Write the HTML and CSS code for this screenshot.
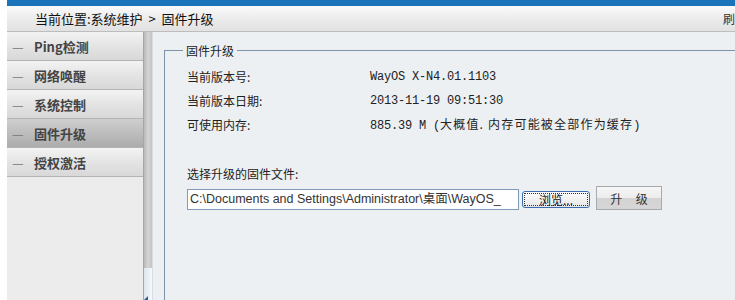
FILE: index.html
```html
<!DOCTYPE html>
<html lang="zh-CN">
<head>
    <meta charset="UTF-8">
    <title>固件升级</title>
    <link rel="stylesheet" href="styles.css">
</head>
<body>
    <div class="page">
        <div class="top-bar"></div>

        <div class="crumb">
            <span>当前位置:系统维护 &nbsp;&gt;&nbsp; 固件升级</span>
            <span class="crumb-right">刷</span>
        </div>

        <div class="main">
            <ul class="menu">
                <li><span class="dash">—</span>Ping检测</li>
                <li><span class="dash">—</span>网络唤醒</li>
                <li><span class="dash">—</span>系统控制</li>
                <li class="active"><span class="dash">—</span>固件升级</li>
                <li><span class="dash">—</span>授权激活</li>
            </ul>

            <div class="frame-bar">
                <div class="frame-thumb"></div>
                <div class="frame-track"></div>
            </div>

            <div class="content">
                <fieldset class="box">
                    <legend>固件升级</legend>

                    <div class="row">
                        <span class="label">当前版本号:</span>
                        <span class="value">WayOS X-N4.01.1103</span>
                    </div>
                    <div class="row">
                        <span class="label">当前版本日期:</span>
                        <span class="value">2013-11-19 09:51:30</span>
                    </div>
                    <div class="row">
                        <span class="label">可使用内存:</span>
                        <span class="value">885.39 M (<span class="cjk">大概值. 内存可能被全部作为缓存</span>)</span>
                    </div>

                    <div class="pick-title">选择升级的固件文件:</div>
                    <div class="pick-row">
                        <div class="file-path">C:\Documents and Settings\Administrator\桌面\WayOS_</div>
                        <button class="btn-browse"><span>浏览...</span></button>
                        <button class="btn-upgrade">升&nbsp;&nbsp;&nbsp;&nbsp;&nbsp;级</button>
                    </div>
                </fieldset>
            </div>
        </div>
    </div>
</body>
</html>
```

FILE: styles.css
```css
/* --- Base --- */
body {
    margin: 0;
    background: #fff;
    font-family: "Noto Sans CJK SC", "Liberation Sans", sans-serif;
    font-size: 12px;
    color: #222;
    overflow: hidden;
}

.page {
    margin-left: 7px;
    height: 300px;
    display: flex;
    flex-direction: column;
}

/* --- Header --- */
.top-bar {
    flex-shrink: 0;
    height: 6px;
    background: #1b73b9;
}

.crumb {
    flex-shrink: 0;
    height: 25px;
    display: flex;
    align-items: center;
    justify-content: space-between;
    padding-left: 28px;
    font-size: 13px;
    color: #111;
    background: linear-gradient(#fafafa, #e9e9e9 60%, #e2e2e2);
    border-bottom: 1px solid #bdbdbd;
}

.crumb-right {
    font-size: 12px;
    color: #333;
}

/* --- Body --- */
.main {
    flex: 1;
    min-height: 0;
    display: flex;
}

.menu {
    width: 136px;
    margin: 0;
    padding: 0;
    list-style: none;
    background: #ececec;
    border-right: 1px solid #a6a6a6;
}

.menu li {
    height: 28px;
    display: flex;
    align-items: center;
    padding-left: 5px;
    font-size: 13px;
    font-weight: bold;
    color: #444;
    background: linear-gradient(#f3f3f3, #e4e4e4 50%, #d8d8d8);
    border-bottom: 1px solid #b4b4b4;
}

.menu li.active {
    background: linear-gradient(#cfcfcf, #bdbdbd 50%, #acacac);
}

.dash {
    width: 12px;
    margin-right: 10px;
    font-weight: normal;
    color: #777;
}

.frame-bar {
    width: 8px;
    display: flex;
    flex-direction: column;
    border-right: 1px solid #d8dde3;
}

.frame-thumb {
    height: 236px;
    background: linear-gradient(90deg, #b9b9b9, #d4d4d4 50%, #c4c4c4);
}

.frame-track {
    flex: 1;
    background: linear-gradient(90deg, #dde6ee, #f6f9fc);
    position: relative;
}

.frame-track::after {
    content: "";
    position: absolute;
    left: 0;
    bottom: 0;
    border-left: 4px solid transparent;
    border-bottom: 4px solid #2a5f9a;
}

.content {
    flex: 1;
    background: #edf0f3;
    padding: 10px 0 0 11px;
    overflow: hidden;
}

/* --- Firmware box --- */
.box {
    margin: 0;
    padding: 6px 0 0 22px;
    border: 1px solid #7d93ab;
    border-right: none;
    border-bottom: none;
    height: 260px;
}

.box legend {
    padding: 0 3px;
    margin-left: -4px;
    font-size: 12px;
    color: #222;
}

.row {
    height: 24px;
    line-height: 16px;
    display: flex;
    align-items: center;
}

.label {
    width: 183px;
}

.value {
    font-family: "Liberation Mono", monospace;
    font-size: 12px;
    letter-spacing: -0.2px;
}

.value .cjk {
    font-family: "Noto Sans CJK SC", sans-serif;
    letter-spacing: 1.2px;
}

.pick-title {
    margin-top: 24px;
    height: 24px;
    display: flex;
    align-items: center;
}

.pick-row {
    margin-top: 4px;
    display: flex;
    align-items: center;
}

.file-path {
    width: 328px;
    height: 19px;
    line-height: 19px;
    padding-left: 2px;
    border: 1px solid #7f9db9;
    background: #fff;
    font-family: "Liberation Sans", "Noto Sans CJK SC", sans-serif;
    font-size: 12.5px;
    color: #333;
    white-space: nowrap;
    overflow: hidden;
}

.btn-browse {
    margin-left: 3px;
    width: 68px;
    height: 17px;
    padding: 1px;
    border: 1px solid #3c6bb0;
    border-radius: 3px;
    background: linear-gradient(#fdfdfd, #e6e6e6);
    font-family: "Noto Sans CJK SC", sans-serif;
    font-size: 12px;
    color: #111;
    display: flex;
    align-items: stretch;
}

.btn-browse span {
    flex: 1;
    border: 1px dotted #333;
    line-height: 11px;
}

.btn-upgrade {
    margin-left: 6px;
    width: 66px;
    height: 24px;
    margin-top: -3px;
    border: 1px solid #a9a9a9;
    background: linear-gradient(#f6f6f6, #ececec 50%, #d3d3d3 52%, #d6d6d6);
    font-family: "Noto Sans CJK SC", sans-serif;
    font-size: 12px;
    color: #333;
}
```
